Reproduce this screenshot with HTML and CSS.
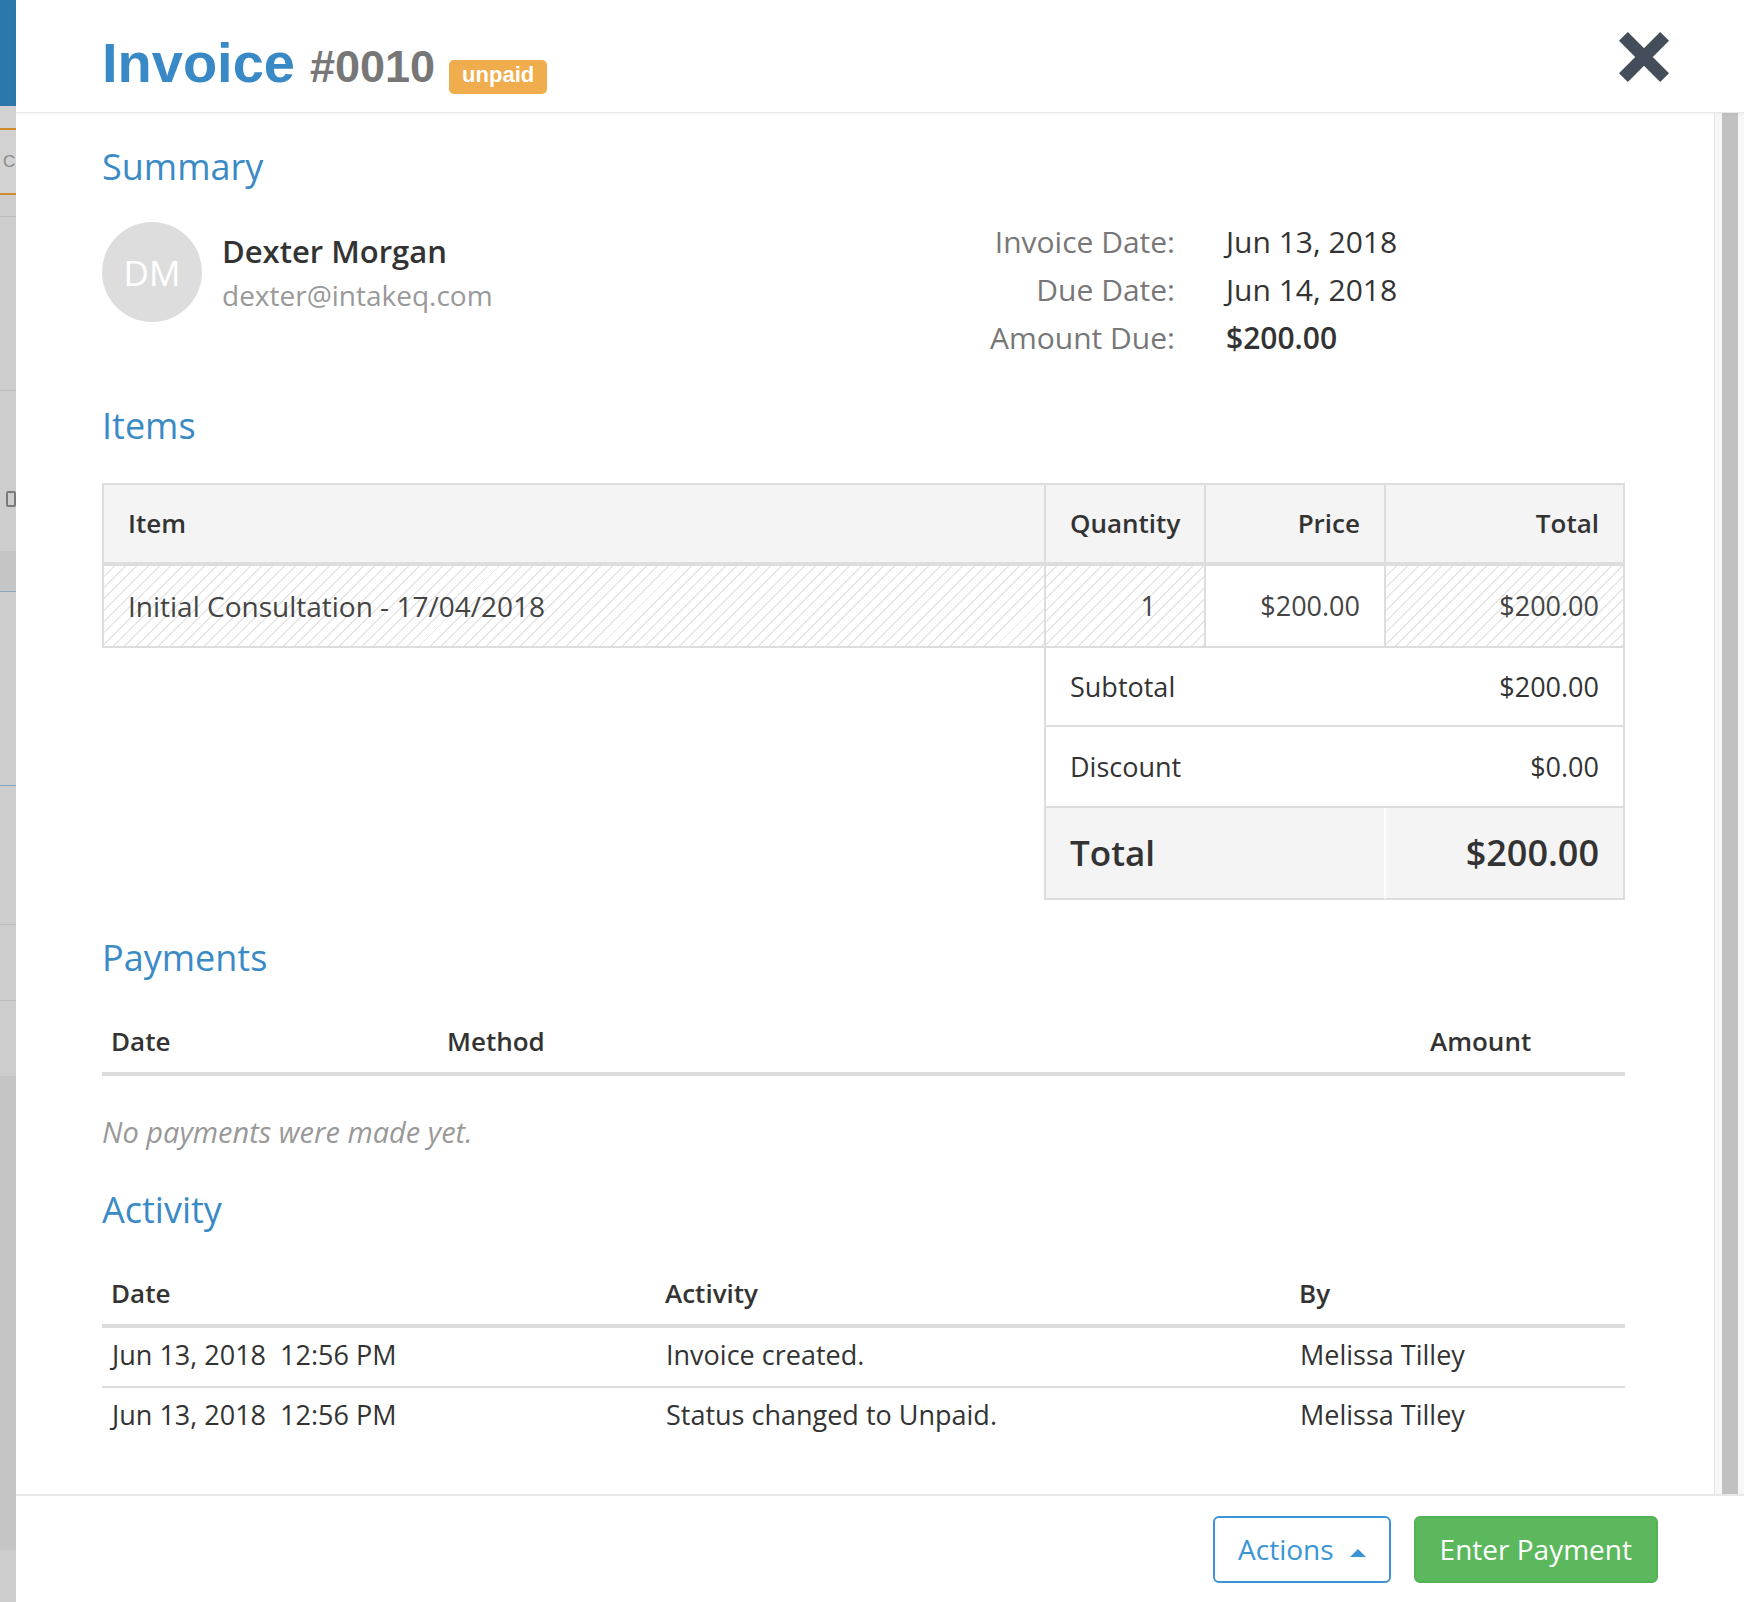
FILE: index.html
```html
<!DOCTYPE html>
<html lang="en">
<head>
<meta charset="utf-8">
<title>Invoice #0010</title>
<link rel="stylesheet" href="styles.css">
</head>
<body>
<div class="page">
  <div class="bg-strip">
    <div class="seg seg-blue"></div>
    <div class="seg seg-a"></div>
    <div class="seg seg-orange"></div>
    <div class="seg seg-c"><span class="strip-letter">C</span></div>
    <div class="seg seg-orange"></div>
    <div class="seg seg-d"></div>
    <div class="seg seg-e"></div>
    <div class="seg seg-f"><span class="strip-icon"></span></div>
    <div class="seg seg-g"></div>
    <div class="seg seg-h"></div>
    <div class="seg seg-i"></div>
    <div class="seg seg-j"></div>
    <div class="seg seg-k"></div>
    <div class="seg seg-l"></div>
    <div class="seg seg-m"></div>
  </div>

  <div class="modal">
    <header class="modal-header">
      <h1 class="title"><span class="title-main">Invoice</span><span class="title-num">#0010</span><span class="badge">unpaid</span></h1>
      <button class="close" aria-label="Close">
        <svg width="50" height="50" viewBox="0 0 50 50"><path d="M4.4 4.4 L45.6 45.6 M45.6 4.4 L4.4 45.6" stroke="#434e5a" stroke-width="12.5" fill="none"/></svg>
      </button>
    </header>

    <div class="modal-body-wrap">
      <div class="modal-body">
        <h2 class="section-title first">Summary</h2>
        <div class="summary-row">
          <div class="person">
            <div class="avatar">DM</div>
            <div class="person-info">
              <div class="name">Dexter Morgan</div>
              <div class="email">dexter@intakeq.com</div>
            </div>
          </div>
          <dl class="meta">
            <dt>Invoice Date:</dt><dd>Jun 13, 2018</dd>
            <dt>Due Date:</dt><dd>Jun 14, 2018</dd>
            <dt>Amount Due:</dt><dd class="strong">$200.00</dd>
          </dl>
        </div>

        <h2 class="section-title items-title">Items</h2>
        <div class="items">
          <div class="th first-col">Item</div>
          <div class="th">Quantity</div>
          <div class="th right">Price</div>
          <div class="th right">Total</div>

          <div class="td first-col hatch desc">Initial Consultation - 17/04/2018</div>
          <div class="td right hatch qty">1</div>
          <div class="td right">$200.00</div>
          <div class="td right hatch">$200.00</div>

          <div class="totals-spacer"></div>
          <div class="sum-label sub">Subtotal</div>
          <div class="sum-value sub">$200.00</div>
          <div class="sum-label disc">Discount</div>
          <div class="sum-value disc">$0.00</div>
          <div class="sum-label grand">Total</div>
          <div class="sum-value grand">$200.00</div>
        </div>

        <h2 class="section-title">Payments</h2>
        <div class="list payments">
          <div class="lh">Date</div>
          <div class="lh">Method</div>
          <div class="lh">Amount</div>
        </div>
        <p class="empty">No payments were made yet.</p>

        <h2 class="section-title">Activity</h2>
        <div class="list activity">
          <div class="lh">Date</div>
          <div class="lh">Activity</div>
          <div class="lh">By</div>

          <div class="ld">Jun 13, 2018&nbsp; 12:56 PM</div>
          <div class="ld">Invoice created.</div>
          <div class="ld">Melissa Tilley</div>

          <div class="ld last">Jun 13, 2018&nbsp; 12:56 PM</div>
          <div class="ld last">Status changed to Unpaid.</div>
          <div class="ld last">Melissa Tilley</div>
        </div>
      </div>
      <div class="scrollbar"><div class="thumb"></div></div>
    </div>

    <footer class="modal-footer">
      <button class="btn btn-outline">Actions <span class="caret"></span></button>
      <button class="btn btn-success">Enter Payment</button>
    </footer>
  </div>
</div>
</body>
</html>
```

FILE: styles.css
```css
* { box-sizing: border-box; }

html, body {
  margin: 0;
  padding: 0;
  overflow: hidden;
}

body {
  font-family: "Open Sans", "DejaVu Sans", sans-serif;
  color: #333;
  background: #fff;
}

.page {
  display: flex;
  width: 1744px;
  height: 1602px;
  overflow: hidden;
}

/* ---------- dimmed page strip on the left ---------- */
.bg-strip {
  width: 16px;
  flex: none;
  display: flex;
  flex-direction: column;
  background: #cdcdcd;
  overflow: hidden;
}
.seg { flex: none; position: relative; overflow: hidden; }
.seg-blue { height: 106px; background: #2d78ab; }
.seg-a { height: 22px; background: #d2d2d2; }
.seg-orange { height: 2px; background: #d08b2c; }
.seg-c { height: 63px; background: #d2d2d2; }
.strip-letter {
  display: block;
  font-family: "Liberation Sans", sans-serif;
  font-size: 17px;
  line-height: 63px;
  color: #8a8a8a;
  padding-left: 3px;
}
.seg-d { height: 22px; background: #cdcdcd; border-bottom: 1px solid #bababa; }
.seg-e { height: 174px; background: #cdcdcd; border-bottom: 1px solid #bababa; }
.seg-f { height: 160px; background: #cdcdcd; }
.strip-icon {
  display: block;
  width: 10px;
  height: 16px;
  margin: 100px 0 0 6px;
  border: 2px solid #7a7a7a;
  border-radius: 2px;
}
.seg-g { height: 41px; background: #c5c5c5; border-bottom: 1px solid #85a9c4; }
.seg-h { height: 194px; background: #cdcdcd; border-bottom: 1px solid #85a9c4; }
.seg-i { height: 139px; background: #cdcdcd; border-bottom: 1px solid #bababa; }
.seg-j { height: 76px; background: #cdcdcd; border-bottom: 1px solid #bababa; }
.seg-k { height: 75px; background: #cdcdcd; }
.seg-l { height: 474px; background: #c5c5c5; }
.seg-m { flex: 1; background: #cdcdcd; }

/* ---------- modal ---------- */
.modal {
  flex: 1;
  display: flex;
  flex-direction: column;
  background: #fff;
  min-width: 0;
}

.modal-header {
  height: 113px;
  flex: none;
  display: flex;
  justify-content: space-between;
  align-items: flex-start;
  padding: 35px 75px 0 86px;
  border-bottom: 1px solid #e9e9e9;
  box-shadow: 0 1px 3px rgba(0, 0, 0, 0.04);
  position: relative;
  z-index: 1;
}

.title {
  margin: 0;
  display: flex;
  align-items: baseline;
  font-family: "Liberation Sans", Arial, sans-serif;
  font-weight: bold;
  line-height: 56px;
}
.title-main { font-size: 56px; color: #3889c5; }
.title-num { font-size: 45px; color: #777; margin-left: 15px; }
.badge {
  display: inline-block;
  margin-left: 14px;
  font-size: 22px;
  line-height: 22px;
  padding: 4px 13px 8px;
  background: #f0ad4e;
  color: #fff;
  border-radius: 5px;
}

.close {
  margin: -3px 0 0 0;
  padding: 0;
  border: 0;
  background: none;
  width: 50px;
  height: 50px;
  display: block;
}
.close svg { display: block; }

.modal-body-wrap {
  flex: 1;
  display: flex;
  min-height: 0;
}

.modal-body {
  flex: 1;
  padding: 32px 89px 0 86px;
  overflow: hidden;
}

.scrollbar {
  width: 30px;
  flex: none;
  background: #f7f7f7;
  border-left: 1px solid #e6e6e6;
  padding: 0 6px 0 7px;
}
.thumb {
  height: 100%;
  background: #c1c1c1;
}

/* ---------- sections ---------- */
.section-title {
  margin: 36px 0 0;
  font-size: 36px;
  font-weight: 500;
  line-height: 43px;
  color: #3a8ac6;
}
.section-title.first { margin-top: 0; }
.section-title.items-title { margin-top: 42px; }

.summary-row {
  margin-top: 30px;
  display: flex;
  justify-content: space-between;
  align-items: flex-start;
}

.person {
  display: flex;
  align-items: flex-start;
  margin-top: 4px;
}
.avatar {
  width: 100px;
  height: 100px;
  border-radius: 50%;
  background: #ddd;
  color: #fff;
  font-size: 35px;
  font-weight: 400;
  display: flex;
  align-items: center;
  justify-content: center;
  flex: none;
}
.person-info { margin: 7px 0 0 20px; }
.name {
  font-size: 31px;
  font-weight: 600;
  line-height: 44px;
  color: #333;
}
.email {
  margin-top: 2px;
  font-size: 28px;
  line-height: 40px;
  color: #999;
}

.meta {
  margin: 0;
  display: grid;
  grid-template-columns: auto 399px;
  column-gap: 51px;
  font-size: 30px;
  line-height: 48px;
}
.meta dt { text-align: right; color: #777; }
.meta dd { margin: 0; color: #333; }
.meta dd.strong { font-weight: 600; }

/* ---------- items table ---------- */
.items {
  margin-top: 36px;
  display: grid;
  grid-template-columns: 944px 160px 180px 239px;
  font-size: 27px;
}
.th {
  background: #f4f4f4;
  border-top: 2px solid #ddd;
  border-bottom: 4px solid #ddd;
  border-right: 2px solid #ddd;
  line-height: 77px;
  padding: 0 24px;
  font-size: 26px;
  font-weight: 600;
  color: #333;
  white-space: nowrap;
}
.th.first-col, .td.first-col { border-left: 2px solid #ddd; padding-left: 24px; }
.right { text-align: right; }
.td {
  border-bottom: 2px solid #ddd;
  border-right: 2px solid #ddd;
  line-height: 80px;
  padding: 0 24px;
  color: #444;
  white-space: nowrap;
}
.td.desc { font-size: 28px; }
.td.qty { padding-right: 48px; }
.hatch {
  background: repeating-linear-gradient(135deg, #fff 0, #fff 6.6px, #e6e6e6 6.6px, #e6e6e6 8px);
}

.totals-spacer {
  grid-column: 1;
  grid-row: 3 / span 3;
  border-right: 2px solid #ddd;
}
.sum-label {
  grid-column: 2 / span 2;
  padding-left: 24px;
  border-bottom: 2px solid #ddd;
  color: #333;
}
.sum-value {
  grid-column: 4;
  text-align: right;
  padding-right: 24px;
  border-bottom: 2px solid #ddd;
  border-right: 2px solid #ddd;
  color: #333;
}
.sub { line-height: 77px; }
.disc { line-height: 79px; }
.grand {
  line-height: 90px;
  font-size: 36px;
  font-weight: 600;
  background: #f4f4f4;
}
.sum-label.grand { border-right: 2px solid #fdfdfd; font-size: 35px; }

/* ---------- simple lists ---------- */
.list {
  margin-top: 35px;
  display: grid;
  font-size: 27px;
}
.payments { grid-template-columns: 336px 983px 1fr; }
.activity { grid-template-columns: 554px 634px 1fr; }

.lh {
  padding: 7px 9px 11px;
  line-height: 40px;
  font-size: 26px;
  font-weight: 600;
  color: #333;
  border-bottom: 4px solid #ddd;
}
.ld {
  padding: 7px 10px 11px;
  line-height: 40px;
  color: #333;
  border-bottom: 2px solid #ddd;
  white-space: nowrap;
}
.ld.last { border-bottom: 0; }

.empty {
  margin: 36px 0 0;
  font-size: 29px;
  line-height: 40px;
  font-style: italic;
  color: #999;
}

/* ---------- footer ---------- */
.modal-footer {
  height: 108px;
  flex: none;
  border-top: 2px solid #e8e8e8;
  padding: 20px 86px 0 0;
  display: flex;
  justify-content: flex-end;
  align-items: flex-start;
  gap: 23px;
}
.btn {
  height: 67px;
  border: 2px solid;
  border-radius: 6px;
  font-family: "Open Sans", sans-serif;
  font-size: 28px;
  line-height: 63px;
  padding: 0 24px;
  display: inline-flex;
  align-items: center;
  white-space: nowrap;
}
.btn-outline {
  background: #fff;
  border-color: #3b95d5;
  color: #3b95d5;
  padding: 0 23px;
}
.caret {
  display: inline-block;
  width: 0;
  height: 0;
  margin: 6px 0 0 16px;
  border-left: 8px solid transparent;
  border-right: 8px solid transparent;
  border-bottom: 8px solid #3b95d5;
}
.btn-success {
  background: #5cb85c;
  border-color: #55b155;
  color: #fff;
}
```
